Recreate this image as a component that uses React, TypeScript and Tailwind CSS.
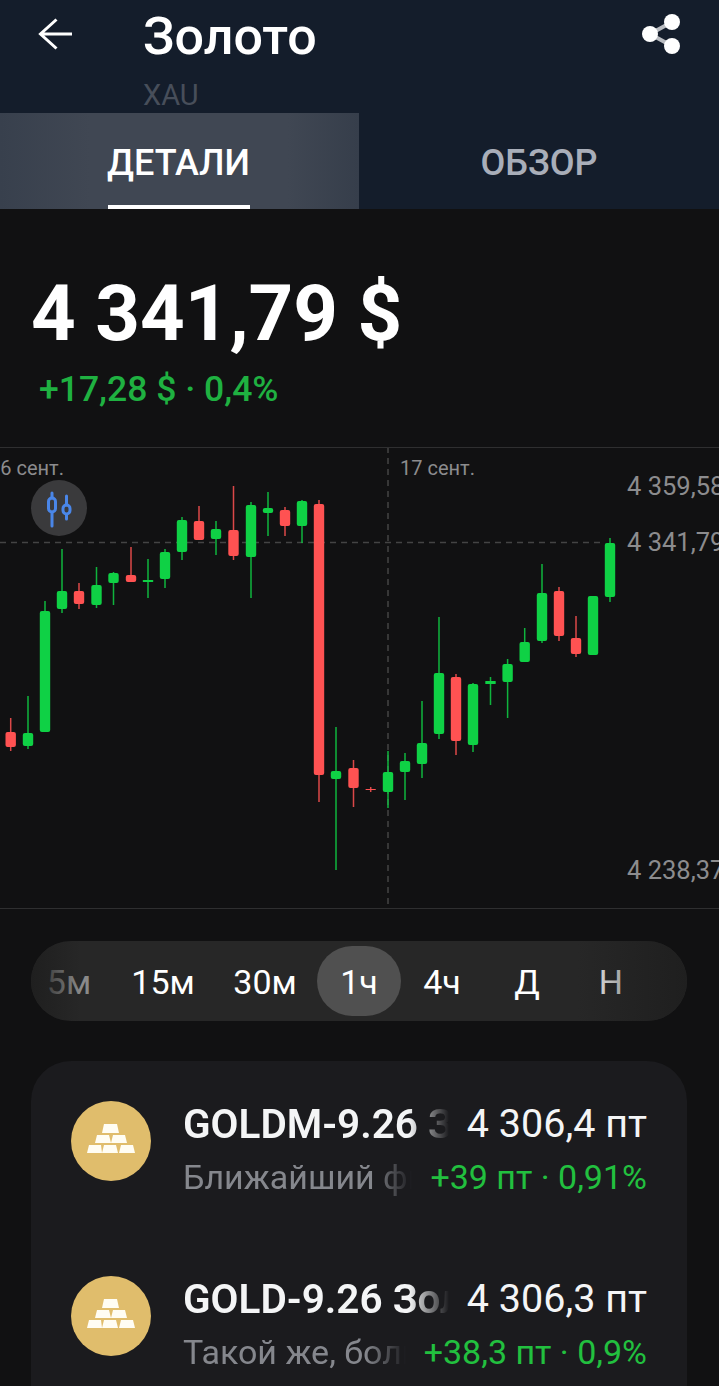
const GREEN = "#0fd145";
const RED = "#ff5252";

// x, wick top, wick bottom, body top, body bottom, up?
const CANDLES: [number, number, number, number, number, boolean][] = [
  [10.7, 718, 751, 732, 747, false],
  [28, 696, 749, 733, 746, true],
  [45, 601, 732, 611, 732, true],
  [62, 549, 613, 591, 609, true],
  [79, 583, 609, 591, 604, false],
  [96.5, 567, 608, 585, 605, true],
  [113.5, 572, 605, 573, 583, true],
  [131, 547, 582, 575, 582, false],
  [148, 559, 598, 580, 582, true],
  [165, 549, 588, 552, 579, true],
  [182, 517, 560, 520, 552, true],
  [199, 506, 540, 521, 540, false],
  [216, 521, 555, 529, 539, true],
  [233.5, 486, 560, 530, 556, false],
  [251, 502, 598, 505, 557, true],
  [268, 492, 536, 508, 513, true],
  [285, 507, 536, 510, 526, false],
  [302, 500, 543, 501, 526, true],
  [319, 500, 802, 504, 775, false],
  [336, 727, 870, 771, 779, true],
  [353.5, 760, 807, 768, 788, false],
  [370.7, 787, 792, 789, 790, false],
  [388, 751, 808, 772, 792, true],
  [405, 753, 800, 761, 772, true],
  [422, 701, 778, 743, 764, true],
  [439, 617, 739, 673, 734, true],
  [456, 674, 755, 677, 741, false],
  [473, 683, 752, 684, 745, true],
  [490.5, 677, 705, 681, 684, true],
  [507.6, 659, 718, 664, 682, true],
  [524.7, 628, 662, 642, 662, true],
  [542, 564, 643, 593, 641, true],
  [559, 587, 641, 591, 636, false],
  [576, 616, 657, 638, 654, false],
  [593, 596, 655, 596, 655, true],
  [610, 538, 602, 543, 597, true],
];

const FRAMES: { label: string; width: string; active?: boolean; dim?: boolean }[] = [
  { label: "5м", width: "w-[88px]", dim: true },
  { label: "15м", width: "w-[100px]" },
  { label: "30м", width: "w-[104px]" },
  { label: "1ч", width: "w-[84px]", active: true },
  { label: "4ч", width: "w-[82px]" },
  { label: "Д", width: "w-[88px]" },
  { label: "Н", width: "w-[80px]" },
];

function GoldIcon() {
  return (
    <div className="w-20 h-20 shrink-0 rounded-full bg-[#e0bd6c] flex items-center justify-center">
      <svg width="80" height="80" viewBox="0 0 80 80" fill="#fffdf3">
        <polygon points="33,23 46,23 48,32 31,32" />
        <polygon points="26,34 38,34 40,42 24,42" />
        <polygon points="42,34 54,34 56,42 40,42" />
        <polygon points="18,44 30,44 31,52 16,52" />
        <polygon points="33,44 45,44 47,52 31,52" />
        <polygon points="50,44 62,44 64,52 48,52" />
      </svg>
    </div>
  );
}

function Contract({ name, sub, price, change, topClass }: { name: string; sub: string; price: string; change: string; topClass: string }) {
  return (
    <div className={`flex items-start gap-[33px] pl-10 pr-10 ${topClass}`}>
      <GoldIcon />
      <div className="flex-1 min-w-0 flex flex-col">
        <div className="flex items-center gap-[18px] h-[46px]">
          <div className="flex-1 min-w-0 -ml-px overflow-hidden whitespace-nowrap text-[40.5px] font-semibold text-[#f4f5f6] [mask-image:linear-gradient(to_right,black_calc(100%-40px),transparent)]">
            {name}
          </div>
          <div className="shrink-0 text-[39.5px] text-[#f4f5f6]">{price}</div>
        </div>
        <div className="flex items-center gap-[18px] h-[46px] mt-[7px]">
          <div className="flex-1 min-w-0 -ml-px overflow-hidden whitespace-nowrap text-[34px] text-[#85878d] [mask-image:linear-gradient(to_right,black_calc(100%-40px),transparent)]">
            {sub}
          </div>
          <div className="shrink-0 text-[34px] text-[#22c03f]">{change}</div>
        </div>
      </div>
    </div>
  );
}

export default function App() {
  return (
    <div className="w-[719px] h-[1386px] overflow-hidden bg-[#111112] font-[Roboto,sans-serif]">
      <header className="bg-[#141d2b]">
        <div className="h-[113px] flex items-start">
          <div className="w-[144px] pl-[38px] pt-[18px] shrink-0">
            <svg width="36" height="32" viewBox="0 0 36 32" fill="none" stroke="#fff" strokeWidth="3">
              <path d="M34 16 H3 M18.5 1.5 L2.5 16 L18.5 30.5" />
            </svg>
          </div>
          <div className="flex-1 flex flex-col -ml-px">
            <div className="text-[52px] leading-[56px] font-medium text-white mt-[9px]">Золото</div>
            <div className="text-[29px] leading-[34px] text-[#474e5a] mt-[13px]">XAU</div>
          </div>
          <div className="pt-[13px] pr-[38px]">
            <svg width="40" height="42" viewBox="0 0 40 42">
              <path d="M9 21 L31 9 M9 21 L31 33" stroke="#b9bcc1" strokeWidth="4" />
              <circle cx="9" cy="21" r="8" fill="#fff" />
              <circle cx="31" cy="9" r="8" fill="#fff" />
              <circle cx="31" cy="33" r="8" fill="#fff" />
            </svg>
          </div>
        </div>
        <div className="h-24 flex">
          <div className="w-[359px] flex justify-center bg-[linear-gradient(to_right,#38404d,#404753_25%,#404753_80%,#363e4b)]">
            <div className="w-[142px] h-24 -ml-0.5 flex items-center justify-center pt-2 border-b-4 border-white text-[36px] font-medium text-white whitespace-nowrap">
              ДЕТАЛИ
            </div>
          </div>
          <div className="flex-1 flex items-center justify-center pt-1 text-[36px] font-medium text-[#a9aeb9]">ОБЗОР</div>
        </div>
      </header>

      <section className="h-[238px] px-[33px] pt-[63px]">
        <div className="text-[78px] leading-[84px] font-bold text-white -ml-0.5 whitespace-nowrap">4 341,79 $</div>
        <div className="text-[35.5px] leading-9 font-medium text-[#1fb141] ml-[6px] mt-[15px]">+17,28 $ · 0,4%</div>
      </section>

      <section className="relative h-[462px] overflow-hidden border-y border-[#2f2f30]">
        <svg className="absolute left-0 -top-px" width="719" height="462" viewBox="0 447 719 462">
          <path d="M0 542.5 H604" stroke="#444" strokeWidth="1.5" strokeDasharray="6 5" />
          <path d="M388 447 V908" stroke="#444" strokeWidth="1.5" strokeDasharray="6 5" />
          {CANDLES.map(([x, wt, wb, bt, bb, up]) => (
            <g key={x} fill={up ? GREEN : RED}>
              <rect x={x - 0.75} y={wt} width="1.5" height={wb - wt} opacity="0.85" />
              <rect x={x - 5.2} y={bt} width="10.4" height={bb - bt} rx={bb - bt > 3 ? 2 : 0.5} />
            </g>
          ))}
        </svg>
        <span className="absolute -left-[11px] top-[8px] text-[20px] leading-6 text-[#8c8c8e]">16 сент.</span>
        <span className="absolute left-[400px] top-[8px] text-[20px] leading-6 text-[#8c8c8e]">17 сент.</span>
        <span className="absolute left-[627px] top-[24px] text-[25.5px] leading-7 whitespace-nowrap text-[#8c8c8e]">4 359,58</span>
        <span className="absolute left-[627px] top-[80px] text-[25.5px] leading-7 whitespace-nowrap text-[#8c8c8e]">4 341,79</span>
        <span className="absolute left-[627px] top-[408px] text-[25.5px] leading-7 whitespace-nowrap text-[#8c8c8e]">4 238,37</span>
        <div className="absolute left-[31px] top-[32px] w-14 h-14 rounded-full bg-[#3a3a3c] flex items-center justify-center">
          <svg width="56" height="56" viewBox="0 0 56 56" fill="none" stroke="#4a86e8" strokeWidth="3">
            <path d="M21 13 V18 M21 32 V46 M35.5 16 V25 M35.5 35 V39" strokeLinecap="round" />
            <rect x="17.5" y="18" width="7" height="14" rx="3.5" />
            <rect x="32" y="25" width="7" height="9" rx="3.5" />
          </svg>
        </div>
      </section>

      <div className="mx-[31px] w-[656px] mt-8 h-20 relative rounded-[40px] bg-[#272727] overflow-hidden flex items-center">
        <div className="flex items-center -ml-1.5 pt-0.5 text-[34px] text-white">
          {FRAMES.map((f) => (
            <div
              key={f.label}
              className={`${f.width} shrink-0 h-[70px] flex items-center justify-center ${f.active ? "rounded-[35px] bg-[#505050] -mt-0.5 pt-0.5" : ""} ${f.dim ? "text-[#8a8a8a]" : ""}`}
            >
              {f.label}
            </div>
          ))}
        </div>
        <div className="absolute left-0 top-0 bottom-0 w-[50px] bg-gradient-to-r from-[#1f1f1f] to-transparent" />
        <div className="absolute right-0 top-0 bottom-0 w-[110px] bg-gradient-to-l from-[#1f1f1f] to-transparent" />
      </div>

      <div className="mx-[31px] w-[656px] mt-10 h-[400px] rounded-[40px] bg-[#1b1b1e]">
        <Contract topClass="pt-10" name="GOLDM-9.26 Золото" sub="Ближайший фьючерс" price="4 306,4 пт" change="+39 пт · 0,91%" />
        <Contract topClass="pt-[76px]" name="GOLD-9.26 Золото" sub="Такой же, больше" price="4 306,3 пт" change="+38,3 пт · 0,9%" />
      </div>
    </div>
  );
}
